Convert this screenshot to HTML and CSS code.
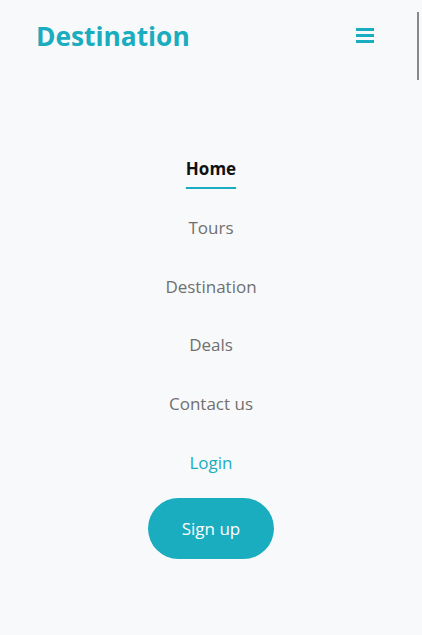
FILE: index.html
```html
<!DOCTYPE html>
<html lang="en">
<head>
<meta charset="utf-8">
<title>Destination</title>
<link rel="stylesheet" href="styles.css">
</head>
<body>
<header class="navbar">
  <a class="brand" href="#">Destination</a>
  <button class="toggler" aria-label="Menu">
    <span class="bar"></span><span class="bar"></span><span class="bar"></span>
  </button>
</header>
<nav class="menu">
  <ul class="menu-list">
    <li><a class="menu-link active" href="#">Home</a></li>
    <li><a class="menu-link" href="#">Tours</a></li>
    <li><a class="menu-link" href="#">Destination</a></li>
    <li><a class="menu-link" href="#">Deals</a></li>
    <li><a class="menu-link" href="#">Contact us</a></li>
    <li><a class="menu-link login" href="#">Login</a></li>
  </ul>
  <a class="signup" href="#">Sign up</a>
</nav>
<div class="scroll-thumb"></div>
</body>
</html>
```

FILE: styles.css
```css
html, body {
  margin: 0;
  padding: 0;
}
body {
  background: #f8f9fa;
  font-family: "Open Sans", "Noto Sans", sans-serif;
  color: #212529;
}
a {
  text-decoration: none;
}
.navbar {
  display: flex;
  justify-content: space-between;
  align-items: center;
  height: 72px;
  padding: 0 48px 0 36px;
}
.brand {
  font-size: 26.3px;
  font-weight: 700;
  color: #1aacbf;
}
.toggler {
  display: flex;
  flex-direction: column;
  gap: 3px;
  padding: 0;
  border: 0;
  background: none;
  width: 18px;
  margin-top: -1px;
}
.bar {
  display: block;
  height: 3px;
  width: 18px;
  background: #1aacbf;
}
.menu {
  display: flex;
  flex-direction: column;
  align-items: center;
  padding-top: 68px;
}
.menu-list {
  list-style: none;
  margin: 0;
  padding: 0;
  display: grid;
  grid-auto-rows: 58.7px;
  align-items: center;
  justify-items: center;
}
.menu-link {
  font-size: 17px;
  color: #707070;
  line-height: 24px;
}
.menu-link.active {
  color: #111;
  font-weight: 700;
  text-decoration: underline;
  text-decoration-color: #1aacbf;
  text-decoration-thickness: 2px;
  text-underline-offset: 12px;
}
.menu-link.login {
  color: #1aacbf;
}
.signup {
  margin-top: 6px;
  width: 126px;
  height: 61px;
  border-radius: 31px;
  background: #1aacbf;
  color: #fff;
  font-size: 17px;
  display: flex;
  align-items: center;
  justify-content: center;
}
.scroll-thumb {
  position: fixed;
  top: 12px;
  right: 3px;
  width: 2px;
  height: 68px;
  background: #888;
}
```
